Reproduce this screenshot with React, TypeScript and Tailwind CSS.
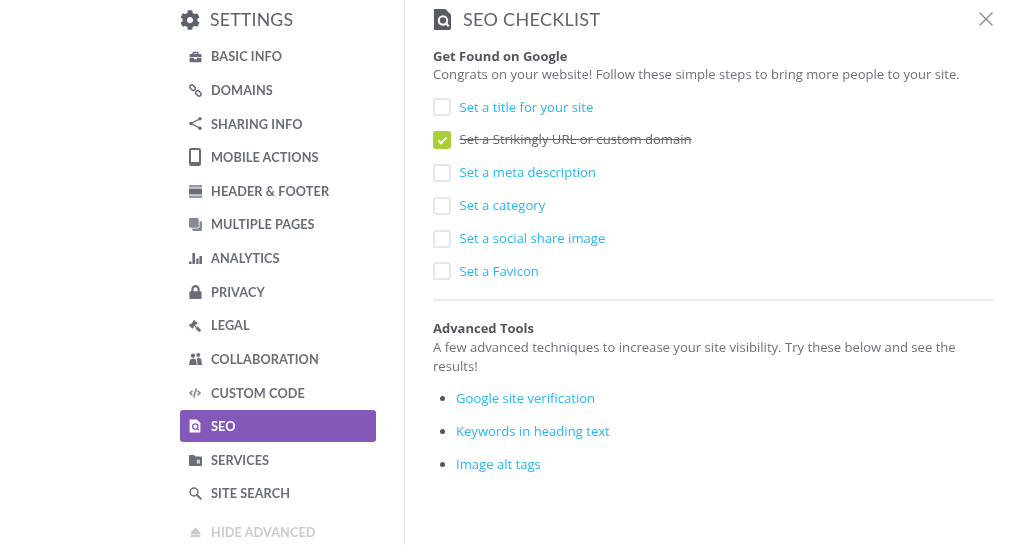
import React from 'react';
import { FaBriefcase, FaCog, FaLock, FaGavel, FaEject, FaCode, FaClone } from 'react-icons/fa';
import { LuX } from 'react-icons/lu';

function SeoIcon({ className, hole }: { className: string; hole: string }) {
  return (
    <svg viewBox="0 0 20 22" className={className}>
      <path d="M1 0h12l6 6v14a2 2 0 0 1-2 2H1z" fill="currentColor" />
      <circle cx="10.5" cy="12" r="4.4" fill="none" stroke={hole} strokeWidth="2.2" />
      <path d="M13.5 15l3 3" stroke={hole} strokeWidth="2.2" />
    </svg>
  );
}

function Chain() {
  return (
    <svg viewBox="0 0 13 13" className="w-[13px] h-[13px]">
      <rect x="-3" y="-2" width="6" height="4" rx="2" transform="translate(3.6 3.6) rotate(45)" fill="none" stroke="currentColor" strokeWidth="1.5" />
      <rect x="-3" y="-2" width="6" height="4" rx="2" transform="translate(9.4 9.4) rotate(45)" fill="none" stroke="currentColor" strokeWidth="1.5" />
    </svg>
  );
}

function Share() {
  return (
    <svg viewBox="0 0 13 13" className="w-[13px] h-[13px]">
      <path d="M11 1.8L2 6.5l9 4.7" fill="none" stroke="currentColor" strokeWidth="1.3" />
      <circle cx="11" cy="1.8" r="1.7" fill="currentColor" />
      <circle cx="2" cy="6.5" r="1.8" fill="currentColor" />
      <circle cx="11" cy="11.2" r="1.7" fill="currentColor" />
    </svg>
  );
}

function Phone() {
  return (
    <svg viewBox="0 0 12 18" className="w-[12px] h-[18px]">
      <rect x="1" y="1" width="10" height="16" rx="1.2" fill="none" stroke="currentColor" strokeWidth="2" />
      <rect x="1" y="14" width="10" height="3" fill="currentColor" />
    </svg>
  );
}

function HeaderFooter() {
  return (
    <svg viewBox="0 0 13 13" className="w-[13px] h-[13px]">
      <rect y="0" width="13" height="2.5" fill="currentColor" opacity="0.7" />
      <rect y="3.5" width="13" height="6" fill="currentColor" />
      <rect y="10.5" width="13" height="2.5" fill="currentColor" opacity="0.7" />
    </svg>
  );
}

function Bars() {
  return (
    <svg viewBox="0 0 13 11" className="w-[13px] h-[11px]">
      <path d="M0 8.5h2.6V11H0zM3.4 0H6v11H3.4zM7.2 5.5h2.4V11H7.2zM10.4 3H13v8h-2.6z" fill="currentColor" />
    </svg>
  );
}

function People() {
  return (
    <svg viewBox="0 0 13 12" className="w-[13px] h-[12px]">
      <circle cx="4" cy="2.6" r="2.2" fill="currentColor" />
      <circle cx="9.3" cy="2" r="2" fill="currentColor" />
      <path d="M0 12l1-5.5 3-1 3 1 .8 5.5z" fill="currentColor" />
      <path d="M8.6 12L7.9 5.5l1.6-.8 2.5 1 1 6.3z" fill="currentColor" />
    </svg>
  );
}

function ServiceFolder() {
  return (
    <svg viewBox="0 0 13 11" className="w-[13px] h-[11px]">
      <path d="M0 1a1 1 0 0 1 1-1h4l1.4 1.6H12a1 1 0 0 1 1 1V10a1 1 0 0 1-1 1H1a1 1 0 0 1-1-1z" fill="currentColor" />
      <rect x="7.8" y="4.6" width="3.2" height="4" fill="#ffffff" opacity="0.65" />
    </svg>
  );
}

function Search() {
  return (
    <svg viewBox="0 0 13 13" className="w-[13px] h-[13px]">
      <circle cx="5" cy="5" r="3.9" fill="none" stroke="currentColor" strokeWidth="1.5" />
      <path d="M8 8l4.4 4.4" stroke="currentColor" strokeWidth="1.8" />
    </svg>
  );
}

const menu = [
  { label: 'BASIC INFO', icon: <FaBriefcase className="w-[13px] h-[12px]" /> },
  { label: 'DOMAINS', icon: <Chain /> },
  { label: 'SHARING INFO', icon: <Share /> },
  { label: 'MOBILE ACTIONS', icon: <Phone /> },
  { label: 'HEADER & FOOTER', icon: <HeaderFooter /> },
  { label: 'MULTIPLE PAGES', icon: <FaClone className="w-[13px] h-[13px] -scale-x-100 opacity-80" /> },
  { label: 'ANALYTICS', icon: <Bars /> },
  { label: 'PRIVACY', icon: <FaLock className="w-[13px] h-[14px]" /> },
  { label: 'LEGAL', icon: <FaGavel className="w-[12px] h-[12px] -scale-x-100" /> },
  { label: 'COLLABORATION', icon: <People /> },
  { label: 'CUSTOM CODE', icon: <FaCode className="w-[12px] h-[10px] opacity-80" /> },
  { label: 'SEO', active: true, icon: <SeoIcon className="w-[12px] h-[14px]" hole="#8358b8" /> },
  { label: 'SERVICES', icon: <ServiceFolder /> },
  { label: 'SITE SEARCH', icon: <Search /> },
];

const checklist = [
  { text: 'Set a title for your site' },
  { text: 'Set a Strikingly URL or custom domain', done: true },
  { text: 'Set a meta description' },
  { text: 'Set a category' },
  { text: 'Set a social share image' },
  { text: 'Set a Favicon' },
];

const tools = ['Google site verification', 'Keywords in heading text', 'Image alt tags'];

export default function App() {
  return (
    <div className="w-[1016px] h-[545px] overflow-hidden bg-white flex font-['Open_Sans',sans-serif] blur-[0.5px]">
      <aside className="w-[405px] h-full shrink-0 border-r border-[#e4e5e7] pl-[180px] font-['Lato',sans-serif] text-[#686d77]">
        <div className="h-[39.8px] flex items-center gap-[10px] text-[#5b606a]">
          <FaCog className="w-[20px] h-[20px]" />
          <span className="text-[17.7px] tracking-[0.2px] leading-none">SETTINGS</span>
        </div>
        <nav className="w-[196px]">
          {menu.map((item) => (
            <div
              key={item.label}
              className={
                item.active
                  ? 'h-[32px] my-[0.82px] flex items-center bg-[#8358b8] rounded-[3px] text-white'
                  : 'h-[33.64px] flex items-center'
              }
            >
              <span className="w-[31px] pl-[9px] shrink-0 flex items-center">{item.icon}</span>
              <span className="text-[12.7px] font-bold tracking-[0.1px] leading-none">{item.label}</span>
            </div>
          ))}
          <div className="h-[38px] mt-[3px] flex items-center text-[#c9cbcf]">
            <span className="w-[31px] pl-[9px] shrink-0 flex items-center">
              <FaEject className="w-[13px] h-[11px]" />
            </span>
            <span className="text-[12.7px] font-bold tracking-[0.1px] leading-none">HIDE ADVANCED</span>
          </div>
        </nav>
      </aside>

      <main className="flex-1 pl-[28px] pr-[22px] text-[#6d7178]">
        <div className="h-[39px] pb-[1px] flex items-center justify-between">
          <div className="flex items-center gap-[11px] text-[#565b64]">
            <SeoIcon className="w-[19px] h-[21px]" hole="#ffffff" />
            <span className="font-['Lato',sans-serif] text-[18px] tracking-[0.3px] leading-none text-[#5f646d]">SEO CHECKLIST</span>
          </div>
          <LuX className="w-[24px] h-[24px] text-[#8b8f97] mr-[-4px]" strokeWidth={1.4} />
        </div>

        <h3 className="mt-[8px] text-[13px] leading-[18px] font-bold text-[#52565e]">Get Found on Google</h3>
        <p className="text-[13.1px] leading-[18px]">Congrats on your website! Follow these simple steps to bring more people to your site.</p>

        <ul className="mt-[8px]">
          {checklist.map((row) => (
            <li key={row.text} className="h-[32.8px] flex items-center gap-[8.5px]">
              {row.done ? (
                <span className="w-[18px] h-[18px] rounded-[3px] bg-[#a9cf35] flex items-center justify-center">
                  <svg viewBox="0 0 12 10" className="w-[11px] h-[9px]">
                    <path d="M1.5 5l3 3 6-6.5" fill="none" stroke="white" strokeWidth="2.2" />
                  </svg>
                </span>
              ) : (
                <span className="w-[18px] h-[18px] rounded-[3px] border-2 border-[#e6e7e9]" />
              )}
              <span className={row.done ? 'text-[13.1px] text-[#62666c] line-through' : 'text-[13.1px] text-[#29b6f0]'}>{row.text}</span>
            </li>
          ))}
        </ul>

        <div className="mt-[11px] border-t-2 border-[#eceded]" />

        <h3 className="mt-[18px] text-[13px] leading-[19px] font-bold text-[#52565e]">Advanced Tools</h3>
        <p className="text-[13.1px] leading-[19.5px]">A few advanced techniques to increase your site visibility. Try these below and see the results!</p>

        <ul className="mt-[5px] list-disc pl-[23px] marker:text-[#52565e]">
          {tools.map((tool) => (
            <li key={tool} className="h-[33px] leading-[33px] text-[13.1px] text-[#29b6f0]">{tool}</li>
          ))}
        </ul>
      </main>
    </div>
  );
}
